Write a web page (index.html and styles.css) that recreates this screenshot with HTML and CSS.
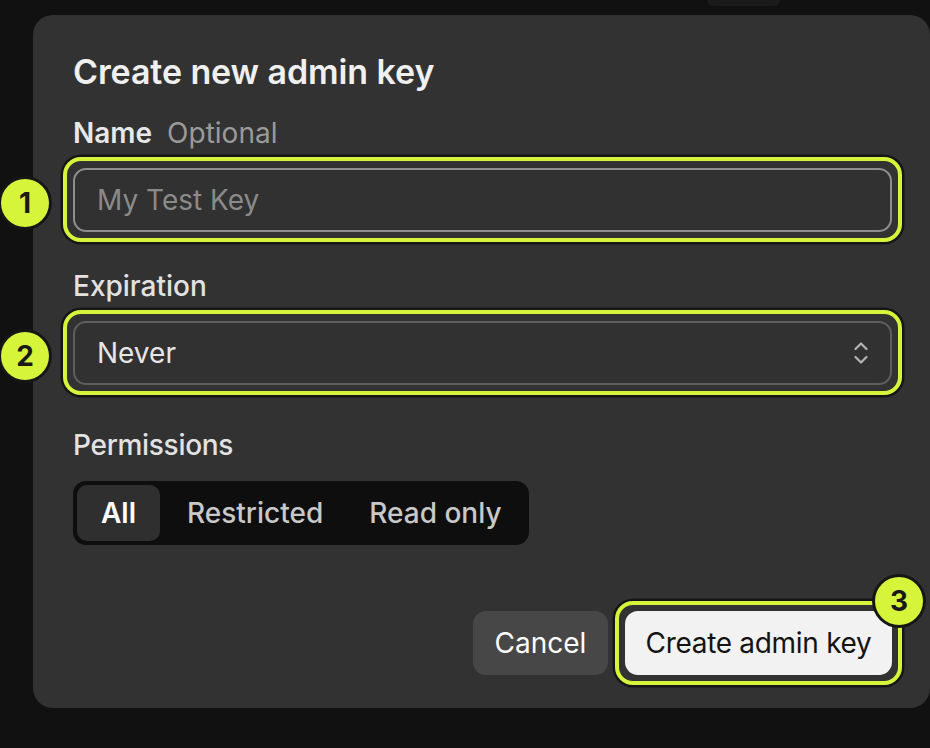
FILE: index.html
```html
<!DOCTYPE html>
<html lang="en">
<head>
<meta charset="utf-8">
<title>Create new admin key</title>
<link rel="stylesheet" href="styles.css">
</head>
<body>
<div class="topnub"></div>
<div class="modal">
  <h1 class="title">Create new admin key</h1>

  <div class="label"><span class="label-main">Name</span><span class="label-opt">Optional</span></div>
  <div class="hl">
    <div class="input"><span class="placeholder">My Test Key</span></div>
    <span class="badge badge-left">1</span>
  </div>

  <div class="label label-gap">Expiration</div>
  <div class="hl">
    <div class="input select">
      <span class="value">Never</span>
      <svg class="chev" width="18" height="28" viewBox="0 0 18 28" fill="none" stroke="#b4b4b4" stroke-width="2.2" stroke-linecap="round" stroke-linejoin="round"><path d="M3.5 10 L9 4.5 L14.5 10"/><path d="M3.5 18 L9 23.5 L14.5 18"/></svg>
    </div>
    <span class="badge badge-left">2</span>
  </div>

  <div class="label label-gap2">Permissions</div>
  <div class="seg">
    <span class="seg-btn active">All</span>
    <span class="seg-btn">Restricted</span>
    <span class="seg-btn">Read only</span>
  </div>

  <div class="actions">
    <button class="btn cancel">Cancel</button>
    <div class="hl hl-btn">
      <button class="btn primary">Create admin key</button>
      <span class="badge badge-corner">3</span>
    </div>
  </div>
</div>
</body>
</html>
```

FILE: styles.css
```css
* { box-sizing: border-box; }
html, body {
  margin: 0;
  padding: 0;
  background: #111111;
  height: 100%;
  overflow: hidden;
}
body {
  font-family: Inter, "Noto Sans", "Liberation Sans", sans-serif;
  color: #ececec;
}
.topnub {
  margin-left: 707px;
  width: 73px;
  height: 6px;
  background: #1b1b1b;
  border-radius: 0 0 9px 9px;
}
.modal {
  margin-left: 33px;
  margin-top: 9px;
  width: 897px;
  background: #323232;
  border-radius: 20px;
  padding: 36px 38px 33px 40px;
  display: flex;
  flex-direction: column;
}
.title {
  margin: 0;
  font-size: 34px;
  line-height: 42px;
  font-weight: 600;
  color: #f0f0f0;
  letter-spacing: -0.1px;
}
.label {
  font-size: 28px;
  line-height: 36px;
  font-weight: 500;
  color: #e2e2e2;
  margin-top: 22px;
}
.label-main { font-weight: 600; color: #e8e8e8; }
.label-opt { margin-left: 15px; color: #9a9a9a; font-weight: 400; }
.label-gap { margin-top: 26px; }
.label-gap2 { margin-top: 32px; letter-spacing: -0.3px; }

.hl {
  position: relative;
  margin: 6px -10px 0 -10px;
  border: 4px solid #d6f53a;
  border-radius: 18px;
  padding: 7px 6px 6px 6px;
  box-shadow: 0 0 0 2.5px #161616;
}
.input {
  height: 64px;
  border: 2px solid #8e8e8e;
  border-radius: 13px;
  background: #313131;
  display: flex;
  align-items: center;
  padding: 0 22px;
  font-size: 28px;
}
.placeholder { color: #8a8a8a; }
.select {
  border-color: #5e5e5e;
  justify-content: space-between;
  padding-right: 20px;
}
.value { color: #e6e6e6; }
.chev { display: block; }

.badge {
  position: absolute;
  width: 48px;
  height: 48px;
  border-radius: 50%;
  background: #d6f53a;
  box-shadow: 0 0 0 3px #161616;
  color: #1a1a1a;
  font-size: 28px;
  font-weight: 700;
  display: flex;
  align-items: center;
  justify-content: center;
}
.badge-left { left: -66px; top: 18px; }
.badge-corner { right: -25px; top: -28px; }

.seg {
  margin-top: 18px;
  align-self: flex-start;
  display: flex;
  background: #0e0e0e;
  border-radius: 13px;
  padding: 4px;
  height: 64px;
}
.seg-btn {
  display: flex;
  align-items: center;
  padding: 0 23px;
  font-size: 28px;
  font-weight: 500;
  color: #c8c8c8;
  border-radius: 10px;
  white-space: nowrap;
}
.seg-btn.active {
  background: #2f2f2f;
  color: #ffffff;
  font-weight: 600;
  padding: 0 24px;
  margin-right: 4px;
}

.actions {
  margin-top: 66px;
  display: flex;
  justify-content: flex-end;
  align-items: center;
  gap: 17px;
}
.btn {
  font-family: inherit;
  font-size: 28px;
  height: 64px;
  border: none;
  border-radius: 13px;
  padding: 0 25px;
  cursor: pointer;
  white-space: nowrap;
}
.cancel {
  background: #474747;
  color: #ffffff;
  width: 135px;
  padding: 0;
}
.primary {
  background: #f2f2f2;
  color: #141414;
  width: 267px;
  padding: 0;
  letter-spacing: -0.3px;
}
.hl-btn {
  margin: -10px -10px -10px -10px;
  padding: 6px;
  border-radius: 18px;
}
```
